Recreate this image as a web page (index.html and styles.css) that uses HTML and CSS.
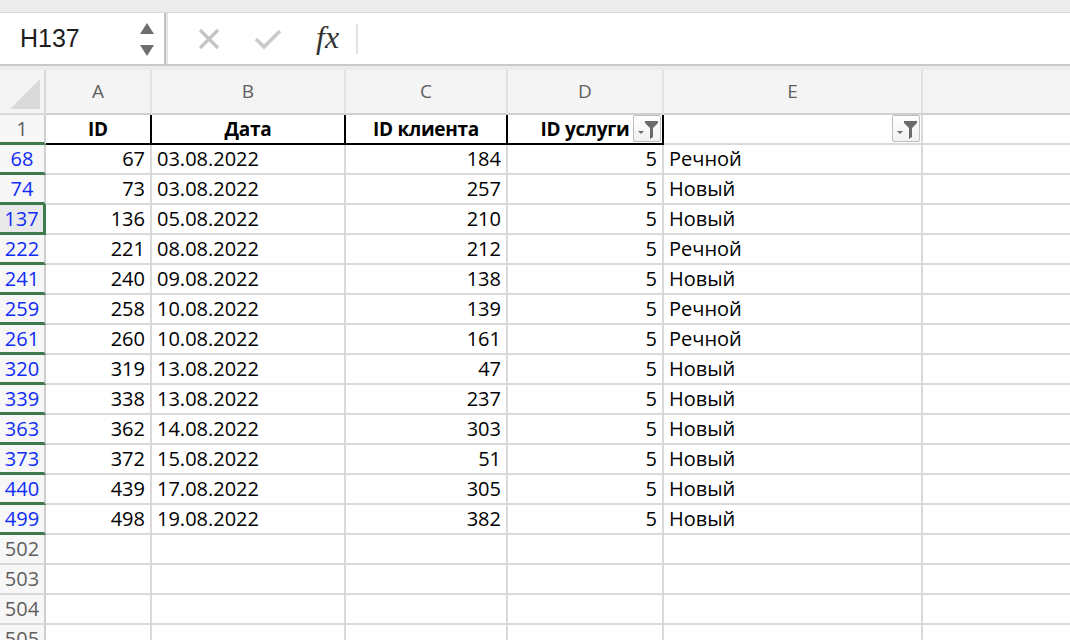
FILE: index.html
```html
<!DOCTYPE html>
<html lang="ru">
<head>
    <meta charset="UTF-8">
    <title>Лист</title>
    <link rel="stylesheet" href="styles.css">
</head>
<body>
    <div class="topstrip"></div>

    <div class="formula-bar">
        <div class="name-box">
            <span class="name-value">H137</span>
            <div class="spinner">
                <svg width="16" height="36" viewBox="0 0 16 36">
                    <polygon points="8,1 15,12 1,12" fill="#6e6e6e"/>
                    <polygon points="1,23 15,23 8,34" fill="#6e6e6e"/>
                </svg>
            </div>
        </div>
        <div class="formula-tools">
            <svg class="tool" width="24" height="24" viewBox="0 0 24 24">
                <path d="M3 3 L21 21 M21 3 L3 21" stroke="#c4c4c4" stroke-width="3.2" fill="none"/>
            </svg>
            <svg class="tool" width="28" height="24" viewBox="0 0 28 24">
                <path d="M2 12 L10 20 L26 4" stroke="#c9c9c9" stroke-width="3.6" fill="none"/>
            </svg>
            <span class="fx">fx</span>
            <span class="sep"></span>
        </div>
    </div>
    <div class="gap"></div>

    <div class="sheet">
        <!-- column letters -->
        <div class="cell corner"><span class="corner-tri"></span></div>
        <div class="cell colhead">A</div>
        <div class="cell colhead">B</div>
        <div class="cell colhead">C</div>
        <div class="cell colhead">D</div>
        <div class="cell colhead">E</div>
        <div class="cell colhead last"></div>

        <!-- row 1: headers -->
        <div class="cell rowhead jump">1</div>
        <div class="cell title boxed">ID</div>
        <div class="cell title boxed">Дата</div>
        <div class="cell title boxed">ID клиента</div>
        <div class="cell title boxed">ID услуги
            <span class="filter-btn">
                <svg width="26" height="25" viewBox="0 0 26 25">
                    <polygon points="4,15 10,15 7,18" fill="#6b6b6b"/>
                    <polygon points="11,5 24,5 24,7 19,12 19,21 16,23 16,12 11,7" fill="#6b6b6b"/>
                </svg>
            </span>
        </div>
        <div class="cell">
            <span class="filter-btn">
                <svg width="26" height="25" viewBox="0 0 26 25">
                    <polygon points="4,15 10,15 7,18" fill="#6b6b6b"/>
                    <polygon points="11,5 24,5 24,7 19,12 19,21 16,23 16,12 11,7" fill="#6b6b6b"/>
                </svg>
            </span>
        </div>
        <div class="cell last"></div>

        <div class="cell rowhead found jump">68</div>
        <div class="cell num">67</div><div class="cell">03.08.2022</div><div class="cell num">184</div><div class="cell num">5</div><div class="cell">Речной</div><div class="cell last"></div>

        <div class="cell rowhead found jump">74</div>
        <div class="cell num">73</div><div class="cell">03.08.2022</div><div class="cell num">257</div><div class="cell num">5</div><div class="cell">Новый</div><div class="cell last"></div>

        <div class="cell rowhead found jump current">137</div>
        <div class="cell num">136</div><div class="cell">05.08.2022</div><div class="cell num">210</div><div class="cell num">5</div><div class="cell">Новый</div><div class="cell last"></div>

        <div class="cell rowhead found jump">222</div>
        <div class="cell num">221</div><div class="cell">08.08.2022</div><div class="cell num">212</div><div class="cell num">5</div><div class="cell">Речной</div><div class="cell last"></div>

        <div class="cell rowhead found jump">241</div>
        <div class="cell num">240</div><div class="cell">09.08.2022</div><div class="cell num">138</div><div class="cell num">5</div><div class="cell">Новый</div><div class="cell last"></div>

        <div class="cell rowhead found jump">259</div>
        <div class="cell num">258</div><div class="cell">10.08.2022</div><div class="cell num">139</div><div class="cell num">5</div><div class="cell">Речной</div><div class="cell last"></div>

        <div class="cell rowhead found jump">261</div>
        <div class="cell num">260</div><div class="cell">10.08.2022</div><div class="cell num">161</div><div class="cell num">5</div><div class="cell">Речной</div><div class="cell last"></div>

        <div class="cell rowhead found jump">320</div>
        <div class="cell num">319</div><div class="cell">13.08.2022</div><div class="cell num">47</div><div class="cell num">5</div><div class="cell">Новый</div><div class="cell last"></div>

        <div class="cell rowhead found jump">339</div>
        <div class="cell num">338</div><div class="cell">13.08.2022</div><div class="cell num">237</div><div class="cell num">5</div><div class="cell">Новый</div><div class="cell last"></div>

        <div class="cell rowhead found jump">363</div>
        <div class="cell num">362</div><div class="cell">14.08.2022</div><div class="cell num">303</div><div class="cell num">5</div><div class="cell">Новый</div><div class="cell last"></div>

        <div class="cell rowhead found jump">373</div>
        <div class="cell num">372</div><div class="cell">15.08.2022</div><div class="cell num">51</div><div class="cell num">5</div><div class="cell">Новый</div><div class="cell last"></div>

        <div class="cell rowhead found jump">440</div>
        <div class="cell num">439</div><div class="cell">17.08.2022</div><div class="cell num">305</div><div class="cell num">5</div><div class="cell">Новый</div><div class="cell last"></div>

        <div class="cell rowhead found jump">499</div>
        <div class="cell num">498</div><div class="cell">19.08.2022</div><div class="cell num">382</div><div class="cell num">5</div><div class="cell">Новый</div><div class="cell last"></div>

        <div class="cell rowhead">502</div>
        <div class="cell"></div><div class="cell"></div><div class="cell"></div><div class="cell"></div><div class="cell"></div><div class="cell last"></div>

        <div class="cell rowhead">503</div>
        <div class="cell"></div><div class="cell"></div><div class="cell"></div><div class="cell"></div><div class="cell"></div><div class="cell last"></div>

        <div class="cell rowhead">504</div>
        <div class="cell"></div><div class="cell"></div><div class="cell"></div><div class="cell"></div><div class="cell"></div><div class="cell last"></div>

        <div class="cell rowhead">505</div>
        <div class="cell"></div><div class="cell"></div><div class="cell"></div><div class="cell"></div><div class="cell"></div><div class="cell last"></div>
    </div>
</body>
</html>
```

FILE: styles.css
```css
:root {
    --chrome: #ececec;
    --header-bg: #f4f4f4;
    --grid: #d9d9d9;
    --head-text: #5f5f5f;
    --found: #0f2cf8;
    --hidden-mark: #3f7a4f;
    --text: #000000;
}

html, body {
    margin: 0;
    padding: 0;
    overflow: hidden;
    background: #ffffff;
}

body {
    font-family: "Open Sans", "Noto Sans", sans-serif;
    color: var(--text);
}

.topstrip {
    height: 12px;
    background: var(--chrome);
}

.formula-bar {
    display: flex;
    height: 51px;
    background: #ffffff;
    border-top: 1px solid #d6d6d6;
    border-bottom: 2px solid #c9c9c9;
}

.name-box {
    width: 166px;
    display: flex;
    align-items: center;
    justify-content: space-between;
    padding: 0 9px 0 20px;
    box-sizing: border-box;
    border-right: 2px solid #c2c2c2;
    box-shadow: 2px 0 0 #e4e4e4;
}

.name-value {
    font-family: "Liberation Sans", Arial, sans-serif;
    font-size: 25px;
    color: #1d1d1d;
}

.spinner {
    display: flex;
    padding-top: 2px;
}

.formula-tools {
    display: flex;
    align-items: center;
    padding-left: 31px;
}

.tool {
    display: block;
}

.tool + .tool {
    margin-left: 33px;
}

.fx {
    margin-left: 34px;
    font-family: "Liberation Serif", "Times New Roman", serif;
    font-style: italic;
    font-size: 32px;
    color: #333333;
    line-height: 1;
    padding-bottom: 4px;
}

.sep {
    width: 2px;
    height: 30px;
    margin-left: 17px;
    background: #e0e0e0;
}

.gap {
    height: 4px;
    background: var(--chrome);
}

.sheet {
    display: grid;
    grid-template-columns: 46px 106px 194px 162px 156px 259px 1fr;
    grid-template-rows: 45px;
    grid-auto-rows: 30px;
    font-size: 20px;
}

.cell {
    position: relative;
    box-sizing: border-box;
    border-right: 2px solid var(--grid);
    border-bottom: 2px solid var(--grid);
    display: flex;
    align-items: center;
    padding: 0 5px;
    white-space: nowrap;
    line-height: 1;
}

.cell.last {
    border-right: none;
}

.corner,
.colhead {
    background: var(--header-bg);
}

.corner {
    padding: 0;
}

.corner-tri {
    position: absolute;
    right: 4px;
    bottom: 4px;
    width: 0;
    height: 0;
    border-left: 30px solid transparent;
    border-bottom: 30px solid #dadada;
}

.colhead {
    justify-content: center;
    font-size: 19px;
    color: var(--head-text);
    border-right-color: #e2e2e2;
    border-bottom-color: #cfcfcf;
}

.rowhead {
    justify-content: center;
    padding: 0;
    font-size: 20px;
    color: var(--head-text);
    background: #f7f7f7;
    border-right-color: #cfcfcf;
}

.rowhead.found {
    color: var(--found);
}

.rowhead.jump {
    border-bottom: 3px solid var(--hidden-mark);
}

.rowhead.current {
    background: #e9e9e9;
    border-right: 3px solid var(--hidden-mark);
}

.num {
    justify-content: flex-end;
}

.title {
    justify-content: center;
    font-weight: 700;
    font-size: 19px;
    letter-spacing: -0.3px;
}

.boxed {
    border-right-color: #000000;
    border-bottom-color: #000000;
}

.filter-btn {
    position: absolute;
    top: 0;
    right: 1px;
    width: 28px;
    height: 27px;
    box-sizing: border-box;
    border: 1px solid #bdbdbd;
    border-radius: 2px;
    background: linear-gradient(#ffffff, #f1f1f1);
    display: flex;
    align-items: center;
    justify-content: center;
}
```
